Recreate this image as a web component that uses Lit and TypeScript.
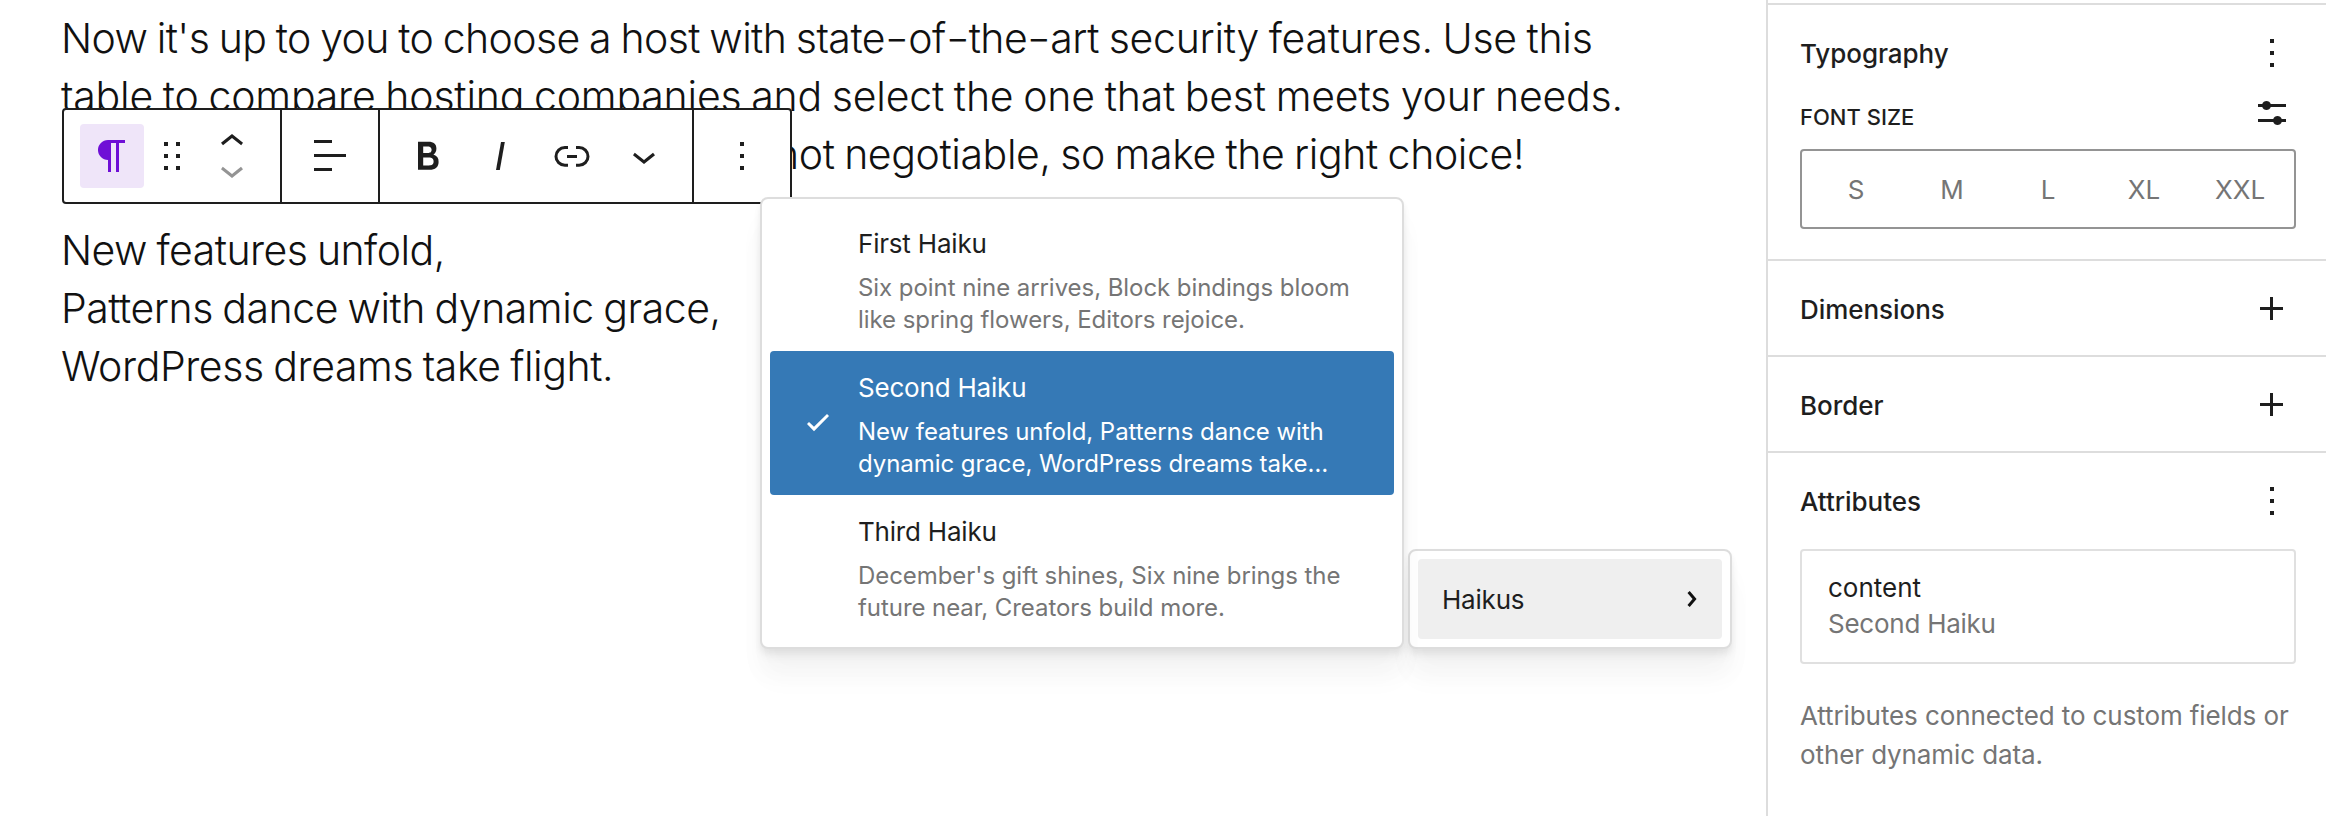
import { LitElement, html, css, svg } from "lit";
import { customElement, property } from "lit/decorators.js";

const icons: Record<string, string> = {
  paragraph:
    "M9.99609 14v-.2251l.00391.0001v6.225h1.5v-14.5h2.5v14.5h1.5v-14.5h3v-1.5h-8.50391c-2.76142 0-5 2.23858-5 5 0 2.7614 2.23858 5 5 5z",
  drag: "M2 7h2V5H2v2zm0 6h2v-2H2v2zm0 6h2v-2H2v2zM8 5v2h2V5H8zm0 8h2v-2H8v2zm0 6h2v-2H8v2z",
  up: "M6.5 12.4L12 8l5.5 4.4-.9 1.2L12 10l-4.5 3.6-1-1.2z",
  down: "M17.5 11.6L12 16l-5.5-4.4.9-1.2L12 14l4.5-3.6 1 1.2z",
  align: "M13 5.5H4V4h9v1.5Zm7 7H4V11h16v1.5Zm-7 7H4V18h9v1.5Z",
  bold: "M14.7 11.3c1-.6 1.5-1.6 1.5-3 0-2.3-1.3-3.4-4-3.4H7v14h5.8c1.4 0 2.5-.3 3.3-1 .8-.7 1.2-1.7 1.2-2.9.1-1.9-.8-3.1-2.6-3.7zm-5.1-4h2.3c.6 0 1.1.1 1.4.4.3.3.5.7.5 1.2s-.2 1-.5 1.2c-.3.3-.8.4-1.4.4H9.6V7.3zm4.6 9c-.4.3-1 .4-1.7.4H9.6v-3.9h2.9c.7 0 1.3.2 1.7.5.4.3.6.8.6 1.4s-.2 1.2-.6 1.6z",
  italic: "M12.5 5L10 19h1.9l2.5-14z",
  link: "M10 17.389H8.444A5.194 5.194 0 1 1 8.444 7H10v1.5H8.444a3.694 3.694 0 0 0 0 7.389H10v1.5ZM14 7h1.556a5.194 5.194 0 0 1 0 10.39H14v-1.5h1.556a3.694 3.694 0 0 0 0-7.39H14V7Zm-4.5 6h5v-1.5h-5V13Z",
  more: "M13 19h-2v-2h2v2zm0-6h-2v-2h2v2zm0-6h-2V5h2v2z",
  check: "M16.5 7.5 10 13.9l-2.5-2.4-1 1 3.5 3.6 7.5-7.6z",
  right:
    "M10.8622 8.04053L14.2805 12.0286L10.8622 16.0167L9.72327 15.0405L12.3049 12.0286L9.72327 9.01672L10.8622 8.04053Z",
  plus: "M11 12.5V17.5H12.5V12.5H17.5V11H12.5V6H11V11H6V12.5H11Z",
  settings:
    "m19 7.5h-7.628c-.3089-.87389-1.1423-1.5-2.122-1.5-.97966 0-1.81309.62611-2.12197 1.5h-2.12803v1.5h2.12803c.30888.87389 1.14231 1.5 2.12197 1.5.9797 0 1.8131-.62611 2.122-1.5h7.628zM19 15h-2.128c-.3089-.8739-1.1423-1.5-2.122-1.5s-1.8131.6261-2.122 1.5h-7.628v1.5h7.628c.3089.8739 1.1423 1.5 2.122 1.5s1.8131-.6261 2.122-1.5h2.128z",
};

@customElement("wp-icon")
export class WpIcon extends LitElement {
  @property() name = "";
  static styles = css`
    :host { display: block; flex: none; width: 48px; height: 48px; }
    svg { display: block; width: 48px; height: 48px; fill: currentColor; }
  `;
  render() {
    return html`<svg viewBox="0 0 24 24" aria-hidden="true">${svg`<path d=${icons[this.name]} />`}</svg>`;
  }
}

interface Run { text: string; tracking: number }
interface Line { runs: Run[]; covered?: boolean }

const intro: Line[] = [
  {
    runs: [
      { text: "Now it's up to you to choose a host with ", tracking: -0.6 },
      { text: "state-of-the-art", tracking: -0.5 },
      { text: " security features. Use this", tracking: -0.29 },
    ],
  },
  { runs: [{ text: "table to compare hosting companies and select the one that best meets your needs.", tracking: -0.2 }] },
  { runs: [{ text: "not negotiable, so make the right choice!", tracking: -0.39 }], covered: true },
];
const haiku: Line[] = [
  { runs: [{ text: "New features unfold,", tracking: -0.53 }] },
  { runs: [{ text: "Patterns dance with dynamic grace,", tracking: -0.48 }] },
  { runs: [{ text: "WordPress dreams take flight.", tracking: -0.42 }] },
];
const options = [
  { title: "First Haiku", lines: ["Six point nine arrives, Block bindings bloom", "like spring flowers, Editors rejoice."] },
  { title: "Second Haiku", lines: ["New features unfold, Patterns dance with", "dynamic grace, WordPress dreams take…"], selected: true },
  { title: "Third Haiku", lines: ["December's gift shines, Six nine brings the", "future near, Creators build more."] },
];

@customElement("app-root")
export class AppRoot extends LitElement {
  static styles = css`
    :host {
      display: flex;
      position: relative;
      width: 2326px;
      height: 816px;
      overflow: hidden;
      background: #fff;
      color: #1e1e1e;
      font: 400 26px/48px Inter, "Liberation Sans", sans-serif;
      white-space: nowrap;
    }
    * { box-sizing: border-box; }
    .canvas { flex: none; width: 1766px; padding: 9px 0 0 61px; }
    .copy { margin: 0 0 38px; font-size: 41px; font-weight: 320; line-height: 58px; word-spacing: -1.5px; color: #111; }
    .line { display: block; }
    .run { white-space: pre; }
    .hyphen { display: inline-block; padding: 0 2.5px; transform: scaleX(1.3); }
    .covered { padding-left: 714px; }

    .toolbar {
      position: absolute;
      left: 62px;
      top: 108px;
      display: flex;
      width: 730px;
      height: 96px;
      border: 2px solid #1e1e1e;
      border-radius: 4px;
      background: #fff;
    }
    .group { display: flex; align-items: center; padding: 0 12px; border-right: 2px solid #1e1e1e; }
    .group:last-child { border-right: 0; padding: 0 24px; }
    .block { padding: 0 22px 0 16px; width: 218px; }
    .alignment { width: 98px; padding: 0 24px; }
    .format { width: 314px; }
    .cell { width: 72px; display: flex; justify-content: center; flex: none; }
    .type { display: flex; align-items: center; justify-content: center; width: 64px; height: 64px; border-radius: 4px; background: #efe5f9; color: #6f0fd6; }
    .grip { margin-left: 16px; width: 32px; }
    .movers { margin-left: 16px; height: 76px; display: flex; flex-direction: column; }
    .movers wp-icon + wp-icon { margin-top: -20px; color: #949494; }

    .popover {
      position: absolute;
      border: 2px solid #ddd;
      border-radius: 8px;
      padding: 8px;
      background: #fff;
      box-shadow: 0 4px 6px rgba(0,0,0,.05), 0 8px 10px rgba(0,0,0,.04), 0 24px 24px rgba(0,0,0,.03), 0 32px 32px rgba(0,0,0,.02);
    }
    .choices { left: 760px; top: 197px; width: 644px; height: 452px; }
    .parent { left: 1408px; top: 549px; width: 324px; height: 100px; }
    .option { display: flex; align-items: center; height: 144px; padding-left: 24px; border-radius: 4px; }
    .mark { width: 48px; margin-right: 16px; }
    .words { padding-top: 6px; }
    .name { line-height: 32px; letter-spacing: -.2px; }
    .desc { margin-top: 12px; font-size: 24px; line-height: 32px; letter-spacing: -.06px; color: #757575; }
    .selected { background: #3579b6; }
    .selected, .selected .desc { color: #fff; }
    .submenu { display: flex; align-items: center; justify-content: space-between; height: 80px; padding: 0 6px 0 24px; border-radius: 4px; background: #efefef; }
    .submenu span { padding-top: 2px; letter-spacing: -.2px; }
    .submenu wp-icon { color: #111; }

    .sidebar { flex: none; width: 560px; border-left: 2px solid #ddd; }
    .section { padding: 24px 30px 0 32px; border-top: 2px solid #ddd; height: 96px; }
    .type-panel { margin-top: 3px; height: 256px; }
    .attrs { height: 363px; }
    .head { display: flex; justify-content: space-between; height: 48px; font-weight: 500; }
    .head h2 { margin: 0; padding-top: 1px; font: inherit; letter-spacing: -.05px; }
    .sub { display: flex; justify-content: space-between; align-items: center; height: 48px; margin-top: 12px; }
    .label { font-size: 22px; font-weight: 500; padding-top: 8px; }
    .sizes { display: flex; height: 80px; margin-top: 12px; padding: 0 6px; border: 2px solid #949494; border-radius: 4px; color: #757575; line-height: 78px; }
    .size { flex: 1; text-align: center; }
    .card { height: 115px; margin-top: 24px; padding: 19px 26px; border: 2px solid #e0e0e0; border-radius: 4px; line-height: 36px; }
    .muted { color: #757575; letter-spacing: -.25px; }
    .note { margin: 32px 0 0; line-height: 39px; letter-spacing: -.1px; color: #757575; }
  `;

  copy(lines: Line[]) {
    return html`<p class="copy">${lines.map(
      (l) =>
        html`<span class="line ${l.covered ? "covered" : ""}">${l.runs.map(
          (r) =>
            html`<span class="run" style="letter-spacing:${r.tracking}px">${r.text
              .split(/(-)/)
              .map((part) => (part === "-" ? html`<span class="hyphen">-</span>` : part))}</span>`,
        )}</span>`,
    )}</p>`;
  }

  head(title: string, icon: string) {
    return html`<div class="head"><h2>${title}</h2><wp-icon name=${icon}></wp-icon></div>`;
  }

  render() {
    return html`
      <main class="canvas">${this.copy(intro)}${this.copy(haiku)}</main>
      <aside class="sidebar">
        <section class="section type-panel">
          ${this.head("Typography", "more")}
          <div class="sub"><span class="label">FONT SIZE</span><wp-icon name="settings"></wp-icon></div>
          <div class="sizes">${["S", "M", "L", "XL", "XXL"].map((s) => html`<span class="size">${s}</span>`)}</div>
        </section>
        <section class="section">${this.head("Dimensions", "plus")}</section>
        <section class="section">${this.head("Border", "plus")}</section>
        <section class="section attrs">
          ${this.head("Attributes", "more")}
          <div class="card"><div>content</div><div class="muted">Second Haiku</div></div>
          <p class="note">Attributes connected to custom fields or<br />other dynamic data.</p>
        </section>
      </aside>
      <div class="toolbar">
        <div class="group block">
          <div class="type"><wp-icon name="paragraph"></wp-icon></div>
          <wp-icon class="grip" name="drag"></wp-icon>
          <div class="movers"><wp-icon name="up"></wp-icon><wp-icon name="down"></wp-icon></div>
        </div>
        <div class="group alignment"><wp-icon name="align"></wp-icon></div>
        <div class="group format">
          ${["bold", "italic", "link", "down"].map((n) => html`<div class="cell"><wp-icon name=${n}></wp-icon></div>`)}
        </div>
        <div class="group"><wp-icon name="more"></wp-icon></div>
      </div>
      <div class="popover parent">
        <div class="submenu"><span>Haikus</span><wp-icon name="right"></wp-icon></div>
      </div>
      <div class="popover choices">
        ${options.map(
          (o) => html`<div class="option ${o.selected ? "selected" : ""}">
            <div class="mark">${o.selected ? html`<wp-icon name="check"></wp-icon>` : ""}</div>
            <div class="words">
              <div class="name">${o.title}</div>
              <div class="desc">${o.lines[0]}<br />${o.lines[1]}</div>
            </div>
          </div>`,
        )}
      </div>
    `;
  }
}
